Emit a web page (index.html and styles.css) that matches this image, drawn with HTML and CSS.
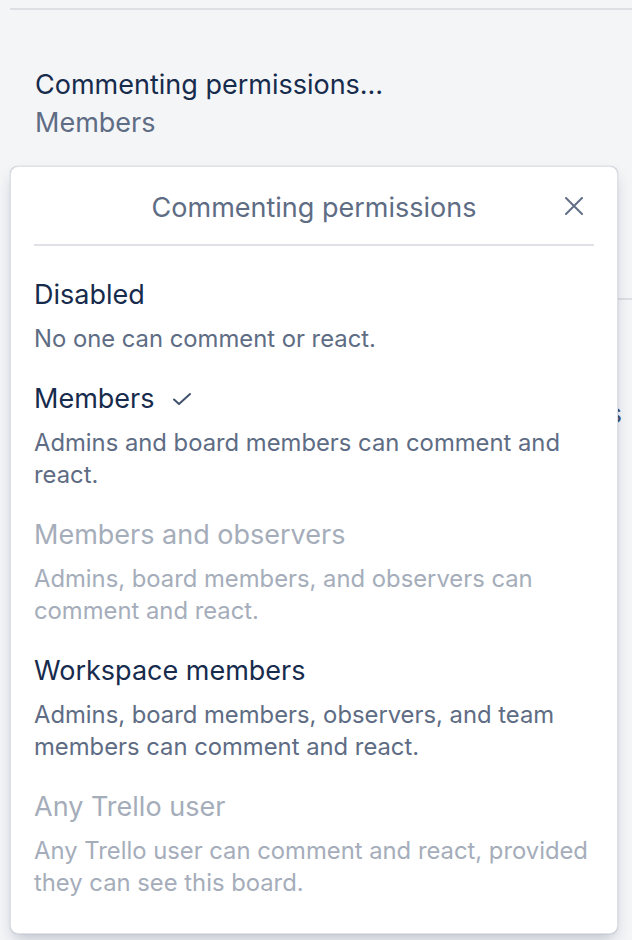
FILE: index.html
```html
<!DOCTYPE html>
<html lang="en">
<head>
  <meta charset="UTF-8">
  <meta name="viewport" content="width=device-width, initial-scale=1.0">
  <title>Commenting permissions</title>
  <link rel="stylesheet" href="styles.css">
</head>
<body>
  <div id="page">
    <div class="section first">
      <div class="setting">
        <div class="setting-title">Commenting permissions…</div>
        <div class="setting-value">Members</div>
      </div>
    </div>
    <div class="section">
      <div class="setting-row">Add/remove permissions</div>
    </div>

    <div id="popover">
      <div class="pop-header">
        <span class="pop-title">Commenting permissions</span>
        <span class="pop-close">
          <svg width="18" height="18" viewBox="0 0 18 18">
            <path d="M1 1 L17 17 M17 1 L1 17" stroke="#626f86" stroke-width="2" stroke-linecap="round" fill="none" />
          </svg>
        </span>
      </div>
      <ul class="options">
        <li class="option">
          <div class="opt-title">Disabled</div>
          <div class="opt-desc">No one can comment or react.</div>
        </li>
        <li class="option">
          <div class="opt-title">Members
            <svg class="check" width="20" height="14" viewBox="0 0 20 14">
              <path d="M2 7.5 L7 12 L18 2" stroke="#42526e" stroke-width="2" stroke-linecap="round" stroke-linejoin="round" fill="none" />
            </svg>
          </div>
          <div class="opt-desc">Admins and board members can comment and react.</div>
        </li>
        <li class="option disabled">
          <div class="opt-title">Members and observers</div>
          <div class="opt-desc">Admins, board members, and observers can comment and react.</div>
        </li>
        <li class="option">
          <div class="opt-title">Workspace members</div>
          <div class="opt-desc">Admins, board members, observers, and team members can comment and react.</div>
        </li>
        <li class="option disabled">
          <div class="opt-title">Any Trello user</div>
          <div class="opt-desc">Any Trello user can comment and react, provided they can see this board.</div>
        </li>
      </ul>
    </div>
  </div>
</body>
</html>
```

FILE: styles.css
```css
* {
  margin: 0;
  padding: 0;
  box-sizing: border-box;
}
li {
  list-style: none;
}
body {
  background: #f4f5f7;
  font-family: Inter, "Noto Sans", sans-serif;
  color: #172b4d;
}
#page {
  position: relative;
  height: 940px;
  overflow: hidden;
  padding-top: 8px;
}
.section {
  margin-left: 10px;
  border-top: 2px solid #dcdfe4;
}
.setting {
  padding: 57px 0 0 25px;
  height: 288px;
}
.setting-title {
  font-size: 27px;
  line-height: 36px;
}
.setting-value {
  font-size: 27px;
  line-height: 36px;
  margin-top: 2px;
  color: #5e6c84;
}
.setting-row {
  padding-top: 96px;
  padding-right: 10px;
  text-align: right;
  font-size: 27px;
  line-height: 36px;
  color: #42526e;
}

#popover {
  position: absolute;
  top: 166px;
  left: 10px;
  width: 608px;
  height: 768px;
  background: #fff;
  border-radius: 8px;
  border: 1px solid #dfe1e6;
  box-shadow: 0 8px 16px -4px rgba(9, 30, 66, 0.25), 0 0 1px rgba(9, 30, 66, 0.31);
  padding: 0 23px;
}
.pop-header {
  position: relative;
  height: 79px;
  padding-top: 3px;
  border-bottom: 2px solid #dfe1e6;
  display: flex;
  align-items: center;
  justify-content: center;
}
.pop-title {
  font-size: 27px;
  color: #5e6c84;
}
.pop-close {
  position: absolute;
  right: 11px;
  top: 30px;
  width: 18px;
  height: 18px;
  display: flex;
}
.options {
  padding: 19px 0 19px;
}
.option {
  padding: 14px 0;
}
.opt-title {
  font-size: 27px;
  line-height: 32px;
  color: #172b4d;
  display: flex;
  align-items: center;
}
.check {
  margin-left: 18px;
}
.opt-desc {
  margin-top: 12px;
  font-size: 23.8px;
  line-height: 32px;
  color: #5e6c84;
}
.option.disabled .opt-title,
.option.disabled .opt-desc {
  color: #a5adba;
}
```
